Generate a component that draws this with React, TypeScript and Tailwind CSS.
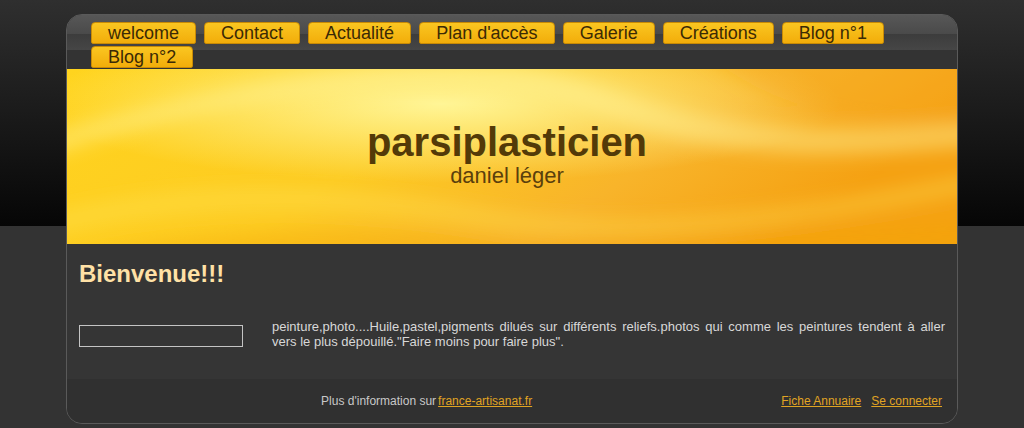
import React from 'react';

const tabs = ['welcome', 'Contact', 'Actualité', "Plan d'accès", 'Galerie', 'Créations', 'Blog n°1', 'Blog n°2'];

const Banner: React.FC = () => (
  <svg className="absolute inset-0 h-full w-full" viewBox="0 0 890 175" preserveAspectRatio="none">
    <defs>
      <linearGradient id="base" x1="0" y1="0" x2="1" y2="0.3">
        <stop offset="0" stopColor="#ffd41e" />
        <stop offset="0.45" stopColor="#fdcb22" />
        <stop offset="0.75" stopColor="#f8b42a" />
        <stop offset="1" stopColor="#f5a112" />
      </linearGradient>
      <radialGradient id="glow" cx="0.42" cy="0.2" r="0.45">
        <stop offset="0" stopColor="#fff596" stopOpacity="1" />
        <stop offset="1" stopColor="#fff596" stopOpacity="0" />
      </radialGradient>
      <filter id="soft" x="-20%" y="-100%" width="140%" height="300%">
        <feGaussianBlur stdDeviation="9" />
      </filter>
    </defs>
    <rect width="890" height="175" fill="url(#base)" />
    <rect width="890" height="175" fill="url(#glow)" />
    <g filter="url(#soft)">
      <path d="M-40 95 C150 25 320 5 470 25 C560 40 600 110 930 75 L930 50 C620 85 560 10 450 0 C300 -10 140 20 -40 70 Z" fill="#fff39a" opacity="0.45" />
      <path d="M-40 150 C120 105 280 115 420 140 C540 160 700 150 930 100 L930 118 C700 165 540 175 420 158 C280 135 120 130 -40 172 Z" fill="#ffe45a" opacity="0.35" />
      <path d="M-40 200 C150 150 300 160 450 172 L930 150 L930 200 Z" fill="#f4a60c" opacity="0.35" />
      <path d="M620 -30 C700 40 780 60 930 55 L930 -30 Z" fill="#f4a41a" opacity="0.3" />
    </g>
  </svg>
);

export default function App() {
  return (
    <div
      className="min-h-[428px] w-full bg-[linear-gradient(to_bottom,#2f2f2f_0px,#060606_226px,#333333_226px)] pt-[14px] pb-[4px]"
      style={{ fontFamily: '"Liberation Sans", Arial, sans-serif' }}
    >
      <div className="mx-auto w-[892px] overflow-hidden rounded-[16px] border border-[#5a5a5a] bg-[#353535]">
        {/* nav */}
        <div className="relative h-[54px] bg-[linear-gradient(to_bottom,#575757_0px,#4a4a4a_19px,#3c3c3c_19px,#464646_35px,#333333_35px)]">
          <div className="flex flex-wrap gap-x-[8px] gap-y-[2px] pl-[24px] pr-[60px] pt-[7px]">
            {tabs.map((t) => (
              <a
                key={t}
                href="#"
                className="h-[22px] rounded-t-[4px] rounded-b-[2px] border border-[#c88a05] bg-[linear-gradient(to_bottom,#fac621,#f2ad0a)] px-[16px] text-[18px] leading-[21px] text-[#3b2a05]"
              >
                {t}
              </a>
            ))}
          </div>
        </div>

        {/* banner */}
        <div className="relative flex h-[175px] flex-col items-center justify-center overflow-hidden">
          <Banner />
          <h1 className="relative -mt-[7px] -ml-[10px] text-[40px] font-bold leading-[46px] text-[#533a08]">parsiplasticien</h1>
          <p className="relative -ml-[10px] -mt-[1px] text-[22px] leading-[24px] text-[#5a3f0c]">daniel léger</p>
        </div>

        {/* content */}
        <div className="h-[135px] px-[12px] pt-[15px]">
          <h2 className="text-[24px] font-bold leading-[30px] text-[#ffe1a6]">Bienvenue!!!</h2>
          <div className="mt-[30px] flex gap-[29px]">
            <div className="mt-[6px] h-[22px] w-[164px] shrink-0 border border-[#c4c4c4]" />
            <p className="flex-1 text-justify text-[13px] leading-[15px] text-[#d8d8d8]">
              peinture,photo....Huile,pastel,pigments dilués sur différents reliefs.photos qui comme les peintures tendent à aller vers le plus dépouillé."Faire moins pour faire plus".
            </p>
          </div>
        </div>

        {/* footer */}
        <div className="flex h-[44px] items-center bg-[#303030] px-[15px] text-[12px]">
          <div className="flex-1 pr-[10px] text-center text-[#c8c8c8]">
            Plus d'information sur<a href="#" className="ml-[2px] text-[#e0a423] underline">france-artisanat.fr</a>
          </div>
          <div className="flex gap-[10px]">
            <a href="#" className="text-[#e0a423] underline">Fiche Annuaire</a>
            <a href="#" className="text-[#e0a423] underline">Se connecter</a>
          </div>
        </div>
      </div>
    </div>
  );
}
